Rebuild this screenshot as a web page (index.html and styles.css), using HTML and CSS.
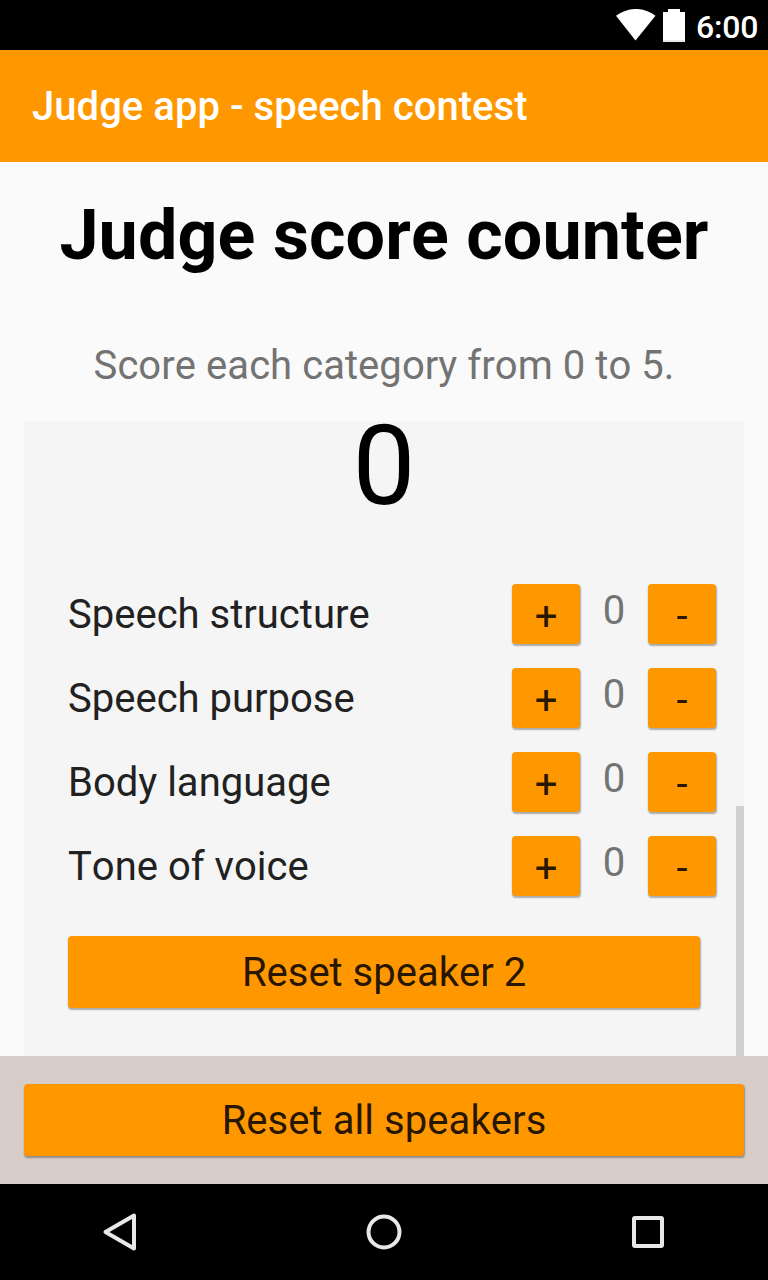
FILE: index.html
```html
<!DOCTYPE html>
<html lang="en">
<head>
<meta charset="utf-8">
<title>Judge app - speech contest</title>
<link rel="stylesheet" href="styles.css">
</head>
<body>
<div class="screen">
  <div class="status">
    <svg class="wifi" width="40" height="32" viewBox="0 0 40 32"><path d="M0 6.800C12-2.300 28-2.300 39.500 6.800L19.500 31.500z" fill="#fff"/></svg>
    <svg class="battery" width="22" height="33" viewBox="0 0 22 33"><path d="M0 3h5V0h12v3h5v28H0z" fill="#fff"/><path d="M0 31h22v2H0z" fill="#e8e8e8"/></svg>
    <span class="clock">6:00</span>
  </div>
  <header class="appbar"><span class="appbar-title">Judge app - speech contest</span></header>
  <main class="content">
    <h1 class="title"><span>Judge score counter</span></h1>
    <p class="hint"><span>Score each category from 0 to 5.</span></p>
    <section class="card">
      <div class="total">0</div>
      <div class="rows">
        <div class="row"><span class="label"><span>Speech structure</span></span><button class="btn small">+</button><span class="value">0</span><button class="btn small">-</button></div>
        <div class="row"><span class="label"><span>Speech purpose</span></span><button class="btn small">+</button><span class="value">0</span><button class="btn small">-</button></div>
        <div class="row"><span class="label"><span>Body language</span></span><button class="btn small">+</button><span class="value">0</span><button class="btn small">-</button></div>
        <div class="row"><span class="label"><span>Tone of voice</span></span><button class="btn small">+</button><span class="value">0</span><button class="btn small">-</button></div>
      </div>
      <button class="btn reset">Reset speaker 2</button>
      <div class="scrollbar"></div>
    </section>
  </main>
  <footer class="bottom"><button class="btn reset-all">Reset all speakers</button></footer>
  <nav class="nav">
    <svg width="40" height="40" viewBox="0 0 40 40"><path d="M34 3.500v33L5.500 20z"/></svg>
    <svg width="40" height="40" viewBox="0 0 40 40"><circle cx="20" cy="20" r="15.500"/></svg>
    <svg width="40" height="40" viewBox="0 0 40 40"><rect x="6" y="6" width="28" height="28" rx="1"/></svg>
  </nav>
</div>
</body>
</html>
```
FILE: styles.css
```css
* { box-sizing: border-box; }
body { margin: 0; font-family: Roboto, "Liberation Sans", sans-serif; font-size: 40px; font-kerning: none; color: #212121; }
.screen { width: 768px; height: 1280px; display: flex; flex-direction: column; background: #fafafa; overflow: hidden; }
.status { height: 50px; background: #000; color: #fff; display: flex; justify-content: flex-end; align-items: flex-start; padding: 9px 9px 0 0; }
.wifi { margin-right: 7px; }
.battery { margin-right: 11px; }
.clock { font-size: 32px; line-height: 36px; font-weight: 500; letter-spacing: -.2px; width: 63px; }
.appbar { height: 112px; background: #ff9800; color: #fff; padding-left: 32px; display: flex; align-items: center; font-size: 40px; font-weight: 500; letter-spacing: .04px; }
.content { flex: 1; display: flex; flex-direction: column; }
.title { margin: 0; height: 144px; line-height: 146px; text-align: center; font-size: 70px; font-weight: 700; letter-spacing: .1px; color: #000; }
.hint { margin: 0; height: 115px; line-height: 120px; text-align: center; letter-spacing: .05px; color: #737373; }
.card { position: relative; flex: 1; margin: 0 24px; background: #f5f5f5; }
.total { height: 163px; font-size: 112px; line-height: 90px; text-align: center; color: #000; }
.rows { display: flex; flex-direction: column; gap: 24px; padding: 0 28px 0 44px; }
.row { display: flex; height: 60px; }
.label { flex: 1; line-height: 62px; }
.value { width: 68px; text-align: center; line-height: 54px; color: #737373; }
.btn { border: 0; margin: 0; padding: 0; display: block; font: inherit; font-kerning: none; color: rgba(0,0,0,.87); background: #ff9800; border-radius: 4px; box-shadow: .5px 1.5px 1.5px rgba(0,0,0,.3); text-align: center; }
.small { width: 68px; line-height: 66px; height: 60px; }
.reset { width: 632px; height: 72px; margin: 40px 0 0 44px; line-height: 74px; }
.scrollbar { position: absolute; right: 0; bottom: 0; width: 8px; height: 250px; background: #d0d0d0; }
.bottom { height: 128px; background: #d7ccc8; padding: 28px 24px; }
.reset-all { width: 720px; height: 72px; line-height: 74px; letter-spacing: .06px; }
.nav { height: 96px; background: #000; display: flex; justify-content: space-between; align-items: center; padding: 0 100px; }
.nav svg { fill: none; stroke: #e8e8e8; stroke-width: 4; stroke-linejoin: round; }
```
